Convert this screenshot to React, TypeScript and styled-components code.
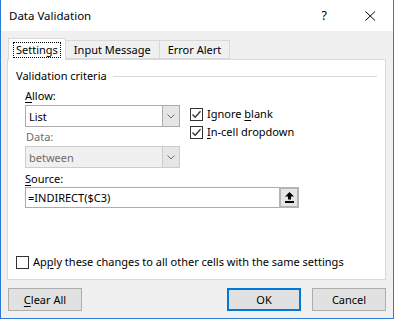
import styled, { createGlobalStyle } from 'styled-components'
import { FC, ReactNode } from 'react'

const colors = {
  frame: '#2b7bd6',
  face: '#f0f0f0',
  line: '#d9d9d9',
  field: '#acacac',
  button: '#e1e1e1',
  buttonBorder: '#adadad',
  disabled: '#6d6d6d',
  text: '#000000',
  focus: '#0078d7',
}

const GlobalStyle = createGlobalStyle`
  html, body {
    margin: 0;
    padding: 0;
    background: #ffffff;
  }
  body {
    font-family: 'Segoe UI', 'Noto Sans', sans-serif;
    font-size: 11px;
    color: ${colors.text};
  }
`

const Chevron = () => (
  <svg width="8" height="5" viewBox="0 0 8 5">
    <polyline points="0.5,0.5 4,4 7.5,0.5" fill="none" stroke="#707070" strokeWidth="1" />
  </svg>
)

const Tick = () => (
  <svg width="11" height="11" viewBox="0 0 11 11">
    <polyline points="1.5,5.5 4.2,8.3 9.5,2.2" fill="none" stroke="#333" strokeWidth="1.3" />
  </svg>
)

const UploadIcon = () => (
  <svg width="9" height="11" viewBox="0 0 9 11">
    <polygon points="4.5,0 9,4.5 6,4.5 6,7.5 3,7.5 3,4.5 0,4.5" fill="#000" />
    <rect x="0" y="9" width="9" height="2" fill="#000" />
  </svg>
)

interface CheckProps {
  checked?: boolean
  children: ReactNode
}

const CheckRow: FC<CheckProps> = ({ checked, children }) => (
  <CheckLine>
    <Box>{checked && <Tick />}</Box>
    <span>{children}</span>
  </CheckLine>
)

interface ComboProps {
  value: string
  disabled?: boolean
}

const Combo: FC<ComboProps> = ({ value, disabled }) => (
  <ComboBox $disabled={disabled}>
    <ComboValue $disabled={disabled}>{value}</ComboValue>
    <ComboArrow $disabled={disabled}>
      <Chevron />
    </ComboArrow>
  </ComboBox>
)

const App: FC = () => {
  return (
    <>
      <GlobalStyle />
      <Window>
        <TitleBar>
          <Title>Data Validation</Title>
          <TitleButtons>
            <Help>?</Help>
            <svg width="11" height="10" viewBox="0 0 11 10">
              <path d="M0.5 0.5 L10 9.5 M10 0.5 L0.5 9.5" stroke="#000" strokeWidth="1" fill="none" />
            </svg>
          </TitleButtons>
        </TitleBar>
        <Body>
          <Tabs>
            <Tab $active>
              <FocusText>Settings</FocusText>
            </Tab>
            <Tab>Input Message</Tab>
            <Tab>Error Alert</Tab>
          </Tabs>
          <Panel>
            <GroupHeader>
              <span>Validation criteria</span>
              <GroupRule />
            </GroupHeader>
            <Criteria>
              <FieldLabel>
                <Key>A</Key>llow:
              </FieldLabel>
              <CriteriaRow>
                <LeftColumn>
                  <Combo value="List" />
                  <FieldLabel $disabled $indent>
                    Data:
                  </FieldLabel>
                  <Combo value="between" disabled />
                </LeftColumn>
                <Options>
                  <CheckRow checked>
                    Ignore <Key>b</Key>lank
                  </CheckRow>
                  <CheckRow checked>
                    <Key>I</Key>n-cell dropdown
                  </CheckRow>
                </Options>
              </CriteriaRow>
              <FieldLabel $gap>
                <Key>S</Key>ource:
              </FieldLabel>
              <SourceField>
                <SourceText>=INDIRECT($C3)</SourceText>
                <RefButton>
                  <UploadIcon />
                </RefButton>
              </SourceField>
            </Criteria>
            <Spacer />
            <ApplyRow>
              <CheckRow>
                Ap<Key>p</Key>ly these changes to all other cells with the same settings
              </CheckRow>
            </ApplyRow>
          </Panel>
          <ButtonBar>
            <Button>
              <Key>C</Key>lear All
            </Button>
            <RightButtons>
              <Button $default>OK</Button>
              <Button>Cancel</Button>
            </RightButtons>
          </ButtonBar>
        </Body>
      </Window>
    </>
  )
}

const Window = styled.div`
  width: 394px;
  height: 319px;
  box-sizing: border-box;
  border: 1px solid ${colors.frame};
  border-top: none;
  display: flex;
  flex-direction: column;
  background: ${colors.face};
`

const TitleBar = styled.div`
  height: 31px;
  background: #ffffff;
  display: flex;
  align-items: center;
  justify-content: space-between;
  padding: 0 17px 0 8px;
`

const Title = styled.div`
  font-size: 11.5px;
  margin-top: -1px;
`

const TitleButtons = styled.div`
  display: flex;
  align-items: center;
  gap: 38px;
`

const Help = styled.span`
  font-size: 12.5px;
  line-height: 13px;
`

const Body = styled.div`
  flex: 1;
  display: flex;
  flex-direction: column;
  padding: 7px 7px 0 6px;
`

const Tabs = styled.div`
  display: flex;
  align-items: flex-end;
  height: 21px;
  padding-left: 1px;
  position: relative;
  z-index: 1;
`

const Tab = styled.div<{ $active?: boolean }>`
  box-sizing: border-box;
  height: ${(p) => (p.$active ? '22px' : '19px')};
  padding: 0 ${(p) => (p.$active ? '4px' : '8px')};
  margin-bottom: ${(p) => (p.$active ? '-1px' : '0')};
  display: flex;
  align-items: center;
  background: ${(p) => (p.$active ? '#ffffff' : colors.face)};
  border: 1px solid ${colors.line};
  border-bottom: ${(p) => (p.$active ? 'none' : `1px solid ${colors.line}`)};
  & + & {
    border-left: none;
  }
`

const FocusText = styled.span`
  border: 1px dotted #000;
  padding: 0 2px;
  line-height: 14px;
`

const Panel = styled.div`
  box-sizing: border-box;
  height: 221px;
  background: #ffffff;
  border: 1px solid ${colors.line};
  display: flex;
  flex-direction: column;
  padding: 8px 7px 9px 8px;
`

const GroupHeader = styled.div`
  display: flex;
  align-items: center;
  gap: 6px;
  line-height: 16px;
  padding-right: 1px;
`

const GroupRule = styled.div`
  flex: 1;
  height: 1px;
  background: ${colors.line};
  margin-top: 1px;
`

const Criteria = styled.div`
  display: flex;
  flex-direction: column;
  padding-left: 9px;
  margin-top: 4px;
`

const FieldLabel = styled.div<{ $disabled?: boolean; $indent?: boolean; $gap?: boolean }>`
  line-height: 16px;
  color: ${(p) => (p.$disabled ? colors.disabled : colors.text)};
  padding-left: ${(p) => (p.$indent ? '1px' : '0')};
  margin: ${(p) => (p.$indent ? '2px 0 1px' : p.$gap ? '3px 0 0' : '0 0 1px')};
`

const Key = styled.u`
  text-decoration: underline;
  text-underline-offset: 2px;
`

const CriteriaRow = styled.div`
  display: flex;
  gap: 10px;
`

const LeftColumn = styled.div`
  display: flex;
  flex-direction: column;
  width: 155px;
`

const ComboBox = styled.div<{ $disabled?: boolean }>`
  box-sizing: border-box;
  height: 22px;
  display: flex;
  border: 1px solid ${(p) => (p.$disabled ? '#cccccc' : colors.field)};
  background: ${(p) => (p.$disabled ? '#f0f0f0' : '#ffffff')};
`

const ComboValue = styled.div<{ $disabled?: boolean }>`
  flex: 1;
  display: flex;
  align-items: center;
  padding-left: 3px;
  color: ${(p) => (p.$disabled ? colors.disabled : colors.text)};
`

const ComboArrow = styled.div<{ $disabled?: boolean }>`
  width: 16px;
  display: flex;
  align-items: center;
  justify-content: center;
  background: ${(p) => (p.$disabled ? '#e6e6e6' : '#e5e5e5')};
  border-left: 1px solid ${(p) => (p.$disabled ? '#cccccc' : colors.field)};
`

const Options = styled.div`
  display: flex;
  flex-direction: column;
  padding-top: 1px;
  gap: 2px;
`

const CheckLine = styled.div`
  display: flex;
  align-items: center;
  gap: 4px;
  line-height: 16px;
`

const Box = styled.div`
  box-sizing: border-box;
  width: 13px;
  height: 13px;
  border: 1px solid #333333;
  background: #ffffff;
  display: flex;
  align-items: center;
  justify-content: center;
`

const SourceField = styled.div`
  box-sizing: border-box;
  width: 274px;
  height: 21px;
  display: flex;
  border: 1px solid ${colors.field};
`

const SourceText = styled.div`
  flex: 1;
  display: flex;
  align-items: center;
  padding-left: 2px;
`

const RefButton = styled.div`
  box-sizing: border-box;
  width: 20px;
  display: flex;
  align-items: center;
  justify-content: center;
  background: #e5e5e5;
  border: 2px solid #b4b4b4;
  margin: -1px -1px -1px 0;
`

const Spacer = styled.div`
  flex: 1;
`

const ApplyRow = styled.div`
  display: flex;
`

const ButtonBar = styled.div`
  display: flex;
  justify-content: space-between;
  margin-top: 8px;
  padding-left: 1px;
`

const RightButtons = styled.div`
  display: flex;
  gap: 11px;
`

const Button = styled.div<{ $default?: boolean }>`
  box-sizing: border-box;
  width: 74px;
  height: 23px;
  display: flex;
  align-items: center;
  justify-content: center;
  background: ${colors.button};
  border: ${(p) => (p.$default ? `2px solid ${colors.focus}` : `1px solid ${colors.buttonBorder}`)};
`

export default App
